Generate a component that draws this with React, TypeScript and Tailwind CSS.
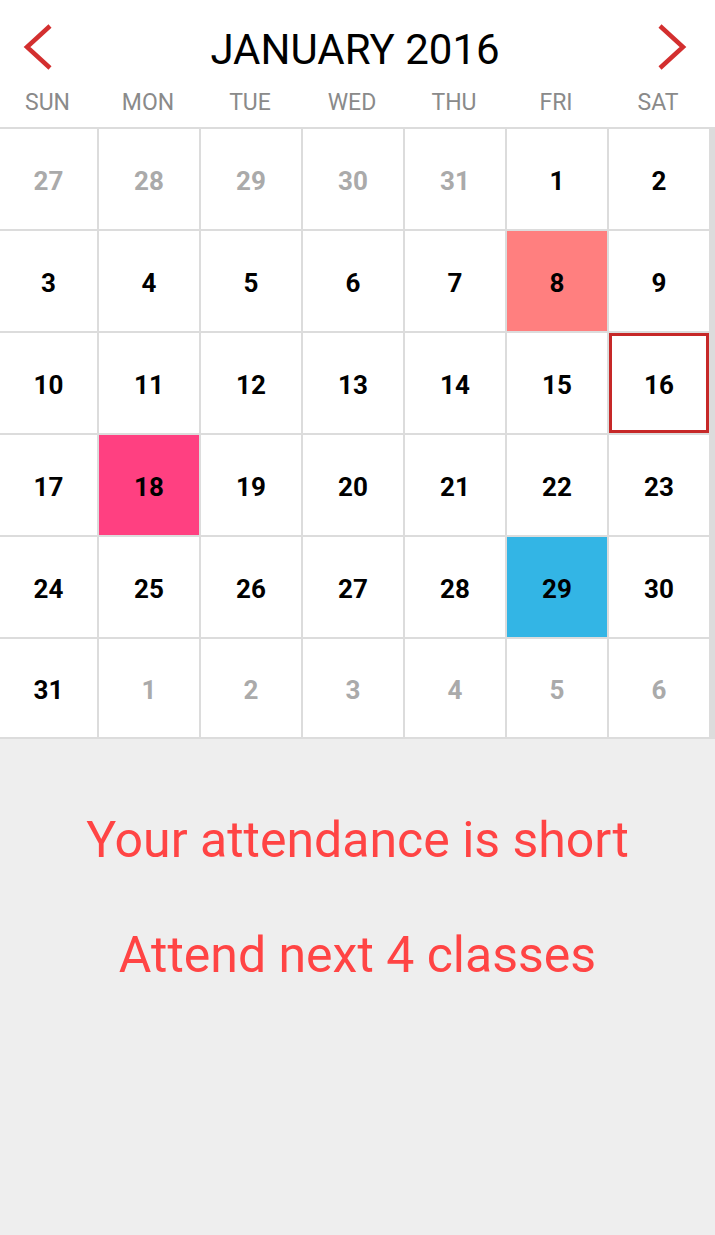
import React from 'react';

type Day = { n: number; muted?: boolean; tone?: 'absent' | 'holiday' | 'event' | 'today' };

const DAY_NAMES = ['SUN', 'MON', 'TUE', 'WED', 'THU', 'FRI', 'SAT'];

const buildDays = (): Day[] => {
  const days: Day[] = [];
  [27, 28, 29, 30, 31].forEach((n) => days.push({ n, muted: true }));
  for (let n = 1; n <= 31; n++) {
    let tone: Day['tone'];
    if (n === 8) tone = 'absent';
    if (n === 16) tone = 'today';
    if (n === 18) tone = 'holiday';
    if (n === 29) tone = 'event';
    days.push({ n, tone });
  }
  [1, 2, 3, 4, 5, 6].forEach((n) => days.push({ n, muted: true }));
  return days;
};

const toneClass = (day: Day) => {
  switch (day.tone) {
    case 'absent':
      return 'bg-[#ff7f7f]';
    case 'holiday':
      return 'bg-[#ff4081]';
    case 'event':
      return 'bg-[#33b5e5]';
    case 'today':
      return 'bg-white border-[3px] border-[#c62828]';
    default:
      return 'bg-white';
  }
};

const Chevron: React.FC<{ dir: 'left' | 'right' }> = ({ dir }) => (
  <svg width="36" height="50" viewBox="0 0 36 50" className="-mt-[5px] shrink-0">
    <path
      d={dir === 'left' ? 'M30 4 L7 25 L30 46' : 'M6 4 L29 25 L6 46'}
      fill="none"
      stroke="#d32f2f"
      strokeWidth="4.5"
    />
  </svg>
);

const App: React.FC = () => {
  const days = buildDays();

  return (
    <div className="w-[715px] min-h-[1235px] bg-[#eeeeee] font-['Roboto',sans-serif]">
      <div className="bg-white">
        <div className="h-[82px] pt-[17px] pl-[20px] pr-[25px] flex items-center justify-between">
          <Chevron dir="left" />
          <h1 className="text-[42px] leading-none text-black">JANUARY 2016</h1>
          <Chevron dir="right" />
        </div>
        <div className="h-[45px] pb-[4px] grid grid-cols-[93px_repeat(6,102px)] pl-[4px] items-center">
          {DAY_NAMES.map((d, i) => (
            <div
              key={d}
              className={`text-center text-[23px] leading-none text-[#8a8a8a] ${i === 0 ? 'pr-[6px]' : ''}`}
            >
              {d}
            </div>
          ))}
        </div>
      </div>

      <div className="bg-[#dcdcdc] py-[2px] pr-[6px] grid grid-cols-[97px_repeat(6,100px)] grid-rows-[repeat(5,100px)_98px] gap-[2px]">
        {days.map((day, i) => (
          <div
            key={i}
            className={`flex items-center justify-center pt-[3px] text-[26px] font-bold leading-none ${toneClass(day)} ${
              day.muted ? 'text-[#aaaaaa]' : 'text-black'
            }`}
          >
            {day.n}
          </div>
        ))}
      </div>

      <div className="flex flex-col items-center pt-[76px] text-[50px] leading-none text-[#ff4444]">
        <p>Your attendance is short</p>
        <p className="mt-[65px]">Attend next 4 classes</p>
      </div>
    </div>
  );
};

export default App;
